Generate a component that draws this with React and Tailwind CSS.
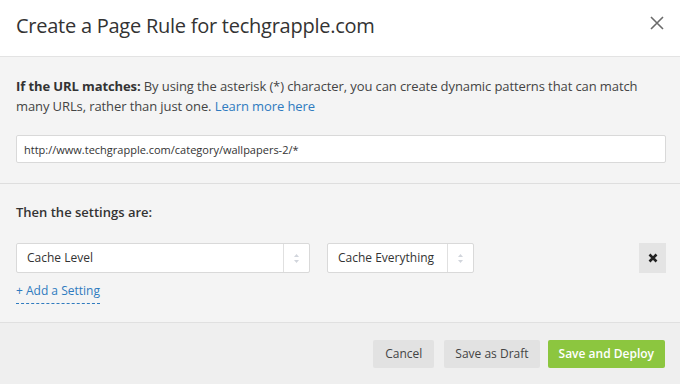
import { useState } from "react";

function Arrows() {
    return (
        <svg width="7" height="11" viewBox="0 0 7 11" className="text-gray-300">
            <path d="M3.5 1 L6 4 L1 4 Z" fill="currentColor" />
            <path d="M3.5 10 L6 7 L1 7 Z" fill="currentColor" />
        </svg>
    );
}

function Select({ value, width }) {
    return (
        <div className={`${width} h-[30px] flex bg-white border border-[#d9d9d9] rounded-[2px]`}>
            <div className="flex-1 flex items-center px-[10px] text-[12px] text-[#333]">{value}</div>
            <div className="w-[26px] flex items-center justify-center border-l border-[#e0e0e0]">
                <Arrows />
            </div>
        </div>
    );
}

export default function App() {
    const [url, setUrl] = useState("http://www.techgrapple.com/category/wallpapers-2/*");

    return (
        <div className="w-[680px] h-[384px] bg-white overflow-hidden font-['Open_Sans',sans-serif] text-[#333]">
            {/* Header */}
            <div className="h-[57px] pl-4 pr-[16px] flex items-center justify-between border-b border-[#e3e3e3]">
                <h1 className="text-[20px] leading-none text-[#333] tracking-[-0.25px] mb-[5px]">Create a Page Rule for techgrapple.com</h1>
                <svg width="14" height="14" viewBox="0 0 14 14" className="mb-[10px]">
                    <path d="M1 1 L13 13 M13 1 L1 13" stroke="#6b6b6b" strokeWidth="1.6" />
                </svg>
            </div>

            {/* URL match */}
            <div className="bg-[#f4f4f4] pl-4 pr-[14px] pt-[19px] pb-[20px] border-b border-[#dedede]">
                <p className="text-[13px] leading-[20px] text-[#444] tracking-[-0.1px]">
                    <span className="font-bold text-[#333]">If the URL matches:</span> By using the asterisk (*) character, you can create dynamic patterns that can match many URLs, rather than just one.{" "}
                    <a className="text-[#2f7bbf]">Learn more here</a>
                </p>
                <input
                    value={url}
                    onChange={(e) => setUrl(e.target.value)}
                    className="mt-[19px] w-full h-[28px] bg-white border border-[#d9d9d9] rounded-[2px] px-[7px] text-[11px] text-[#333] outline-none"
                />
            </div>

            {/* Settings */}
            <div className="bg-[#f4f4f4] pl-4 pr-[14px] pt-[18px] h-[139px] border-b border-[#e0e0e0]">
                <p className="text-[13px] leading-[20px] font-semibold text-[#333]">Then the settings are:</p>
                <div className="mt-[21px] flex items-center">
                    <Select value="Cache Level" width="w-[294px]" />
                    <div className="ml-[17px]">
                        <Select value="Cache Everything" width="w-[147px]" />
                    </div>
                    <div className="flex-1" />
                    <button className="w-[27px] h-[30px] bg-[#e4e4e4] flex items-center justify-center">
                        <svg width="10" height="10" viewBox="0 0 10 10">
                            <path d="M1.5 1.5 L8.5 8.5 M8.5 1.5 L1.5 8.5" stroke="#222" strokeWidth="2.6" />
                        </svg>
                    </button>
                </div>
                <a className="inline-block mt-[9px] text-[12px] leading-[18px] text-[#2f7bbf] pb-[3px] border-b border-dashed border-[#2f7bbf]">
                    + Add a Setting
                </a>
            </div>

            {/* Footer */}
            <div className="bg-[#efefef] h-[61px] pr-[15px] flex items-center justify-end">
                <button className="h-[28px] px-[12px] bg-[#e2e2e2] text-[12px] text-[#444] rounded-[2px]">Cancel</button>
                <button className="ml-[10px] h-[28px] px-[11px] bg-[#e2e2e2] text-[12px] text-[#444] rounded-[2px]">Save as Draft</button>
                <button className="ml-[8px] h-[28px] px-[11px] bg-[#8cc63f] text-[12px] font-semibold text-white rounded-[2px]">Save and Deploy</button>
            </div>
        </div>
    );
}
